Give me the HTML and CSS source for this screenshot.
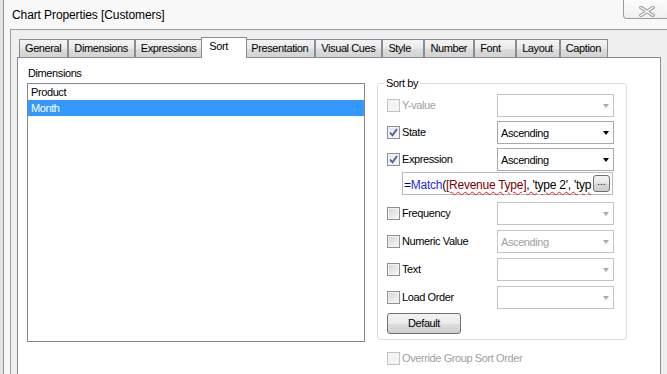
FILE: index.html
```html
<!DOCTYPE html>
<html lang="en">
<head>
    <meta charset="UTF-8">
    <title>Chart Properties [Customers]</title>
    <link rel="stylesheet" href="styles.css">
</head>
<body>
    <div class="window">
        <div class="titlebar">
            <span class="title">Chart Properties [Customers]</span>
            <span class="close-btn">
                <svg width="16" height="11" viewBox="0 0 16 11">
                    <path d="M2 1.5 L14 9.5 M14 1.5 L2 9.5" stroke="#9a9a9a" stroke-width="3.4" stroke-linecap="square" fill="none"/>
                    <path d="M2 1.5 L14 9.5 M14 1.5 L2 9.5" stroke="#ffffff" stroke-width="1.4" stroke-linecap="square" fill="none"/>
                </svg>
            </span>
        </div>

        <div class="client">
            <div class="tabs">
                <span class="tab">General</span>
                <span class="tab">Dimensions</span>
                <span class="tab">Expressions</span>
                <span class="tab active">Sort</span>
                <span class="tab">Presentation</span>
                <span class="tab">Visual Cues</span>
                <span class="tab">Style</span>
                <span class="tab">Number</span>
                <span class="tab">Font</span>
                <span class="tab">Layout</span>
                <span class="tab">Caption</span>
            </div>

            <div class="panel">
                <div class="dims">
                    <div class="field-label">Dimensions</div>
                    <div class="listbox">
                        <div class="item">Product</div>
                        <div class="item selected">Month</div>
                    </div>
                </div>

                <div class="sort-col">
                    <div class="group">
                        <div class="group-title">Sort by</div>

                        <div class="row">
                            <span class="check disabled"><span class="box"></span>Y-value</span>
                            <span class="combo disabled"><span></span><span class="arrow"></span></span>
                        </div>
                        <div class="row">
                            <span class="check"><span class="box checked"></span>State</span>
                            <span class="combo"><span>Ascending</span><span class="arrow"></span></span>
                        </div>
                        <div class="row">
                            <span class="check"><span class="box checked"></span>Expression</span>
                            <span class="combo"><span>Ascending</span><span class="arrow"></span></span>
                        </div>
                        <div class="expr-field">
                            <span class="expr-text"><span class="op">=</span><span class="fn">Match</span>(<span class="typo"><span class="fld">[Revenue Type]</span>, 'type 2', 'typ</span></span>
                            <span class="dots-btn">...</span>
                        </div>
                        <div class="row gap-big">
                            <span class="check"><span class="box"></span>Frequency</span>
                            <span class="combo disabled"><span></span><span class="arrow"></span></span>
                        </div>
                        <div class="row gap-mid">
                            <span class="check"><span class="box"></span>Numeric Value</span>
                            <span class="combo disabled"><span>Ascending</span><span class="arrow"></span></span>
                        </div>
                        <div class="row gap-mid">
                            <span class="check"><span class="box"></span>Text</span>
                            <span class="combo disabled"><span></span><span class="arrow"></span></span>
                        </div>
                        <div class="row gap-mid">
                            <span class="check"><span class="box"></span>Load Order</span>
                            <span class="combo disabled"><span></span><span class="arrow"></span></span>
                        </div>
                        <div class="button">Default</div>
                    </div>

                    <div class="check override disabled"><span class="box"></span>Override Group Sort Order</div>
                </div>
            </div>
        </div>
    </div>
</body>
</html>
```

FILE: styles.css
```css
body {
    margin: 0;
    height: 374px;
    overflow: hidden;
    background: #e4e4e4;
    font-family: "Liberation Sans", Arial, sans-serif;
    font-size: 11px;
    letter-spacing: -0.4px;
    color: #000;
}
.window {
    margin-left: 3px;
    width: 660px;
    height: 420px;
    border-left: 1px solid #8e8e8e;
    border-right: 1px solid #8e8e8e;
    padding: 0 5px 0 6px;
    background: #f8f8f8;
}
.titlebar {
    height: 29px;
    display: flex;
    justify-content: space-between;
    align-items: flex-start;
}
.title {
    font-size: 12px;
    letter-spacing: -0.1px;
    line-height: 15px;
    margin: 8px 0 0 2px;
}
.close-btn {
    width: 47px;
    height: 19px;
    box-sizing: border-box;
    border: 1px solid #9a9a9a;
    border-top: none;
    border-radius: 0 0 4px 4px;
    background: linear-gradient(#fcfcfc, #f0f0f0);
    display: flex;
    justify-content: center;
    padding-top: 6px;
}
.client {
    border: 1px solid #9a9a9a;
    background: #efefef;
    padding: 7px 8px 0 6px;
    height: 400px;
}

/* tab strip */
.tabs {
    display: flex;
    align-items: flex-end;
    height: 20px;
    padding-left: 2px;
}
.tab {
    min-width: 29px;
    padding: 2px 6px 0 5px;
    line-height: 13px;
    height: 15px;
    border: 1px solid #898c95;
    border-bottom: none;
    background: linear-gradient(#f4f4f4, #e9e9e9 50%, #dcdcdc 52%, #d3d3d3);
    white-space: nowrap;
}
.tab.active {
    position: relative;
    z-index: 1;
    height: 18px;
    margin: 0 -2px -1px;
    padding: 2px 8px 0 7px;
    background: #fff;
}
.panel {
    border: 1px solid #898c95;
    background: #fff;
    height: 330px;
    padding: 9px 0 0 9px;
    display: grid;
    grid-template-columns: 338px 250px;
    column-gap: 12px;
    align-items: start;
}

/* left column */
.field-label {
    line-height: 13px;
    margin: 0 0 3px 1px;
}
.listbox {
    height: 259px;
    box-sizing: border-box;
    border: 1px solid #828790;
}
.item {
    height: 16px;
    line-height: 16px;
    padding-left: 3px;
}
.item.selected {
    background: #3399ff;
    color: #fff;
}

/* sort by group */
.sort-col {
    margin-top: 16px;
}
.group {
    border: 1px solid #d5dfe5;
    border-radius: 3px;
    padding: 0 12px 5px 9px;
}
.group-title {
    width: fit-content;
    margin: -7px 0 1px -3px;
    padding: 0 2px;
    line-height: 13px;
    background: #fff;
}
.row {
    display: flex;
    align-items: center;
    height: 23px;
    margin-top: 4px;
}
.row.gap-big {
    margin-top: 7px;
}
.row.gap-mid {
    margin-top: 5px;
}
.check {
    display: flex;
    align-items: center;
    gap: 2px;
    width: 110px;
    line-height: 13px;
}
.check.disabled {
    color: #a0a0a0;
}
.box {
    width: 13px;
    height: 13px;
    box-sizing: border-box;
    border: 1px solid #8e8f8f;
    background: linear-gradient(135deg, #d6d6d6, #f7f7f7);
    box-shadow: inset 0 0 0 1px #f4f4f4;
    flex: none;
}
.box.checked {
    background-image: url("data:image/svg+xml,%3Csvg xmlns='http://www.w3.org/2000/svg' width='11' height='11'%3E%3Cpath d='M2 5.5 L4.5 8.3 L9 2' stroke='%234a5f97' stroke-width='1.8' fill='none'/%3E%3C/svg%3E"), linear-gradient(135deg, #dfe3ea, #f9fafc);
}
.check.disabled .box {
    border-color: #c3c3c3;
    background: #f4f4f4;
    box-shadow: none;
}
.combo {
    width: 117px;
    height: 23px;
    box-sizing: border-box;
    border: 1px solid #a9a9a9;
    background: #fff;
    padding: 0 3px 0 3px;
    display: flex;
    align-items: center;
    justify-content: space-between;
}
.combo.disabled {
    border-color: #c4c4c4;
    color: #a0a0a0;
}
.arrow {
    width: 0;
    height: 0;
    border-left: 3.5px solid transparent;
    border-right: 3.5px solid transparent;
    border-top: 4px solid #000;
    margin-right: 1px;
}
.combo.disabled .arrow {
    border-top-color: #a8a8a8;
}

.expr-field {
    margin: 1px 0 0 15px;
    width: 211px;
    height: 23px;
    box-sizing: border-box;
    border: 1px solid #b5b9c1;
    padding: 0 2px 0 1px;
    display: flex;
    align-items: center;
}
.expr-text {
    flex: 1;
    white-space: nowrap;
    padding-top: 2px;
    font-size: 12px;
    letter-spacing: -0.25px;
}
.op {
    color: #000080;
}
.fn {
    color: #2b2bdd;
}
.fld {
    color: #7a0000;
}
.typo {
    text-decoration: underline wavy #e02020;
    text-decoration-thickness: 1px;
    text-underline-offset: 2px;
}
.dots-btn {
    flex: none;
    width: 17px;
    height: 17px;
    box-sizing: border-box;
    border: 1px solid #707070;
    border-radius: 3px;
    background: linear-gradient(#f4f4f4, #e6e6e6 50%, #d8d8d8 52%, #cdcdcd);
    font-size: 10px;
    line-height: 12px;
    text-align: center;
    letter-spacing: 0;
}
.button {
    margin-top: 4px;
    width: 74px;
    height: 21px;
    box-sizing: border-box;
    border: 1px solid #707070;
    border-radius: 3px;
    background: linear-gradient(#f2f2f2, #ebebeb 50%, #dddddd 52%, #cfcfcf);
    text-align: center;
    line-height: 19px;
}
.override {
    margin: 12px 0 0 10px;
    width: auto;
}
```
